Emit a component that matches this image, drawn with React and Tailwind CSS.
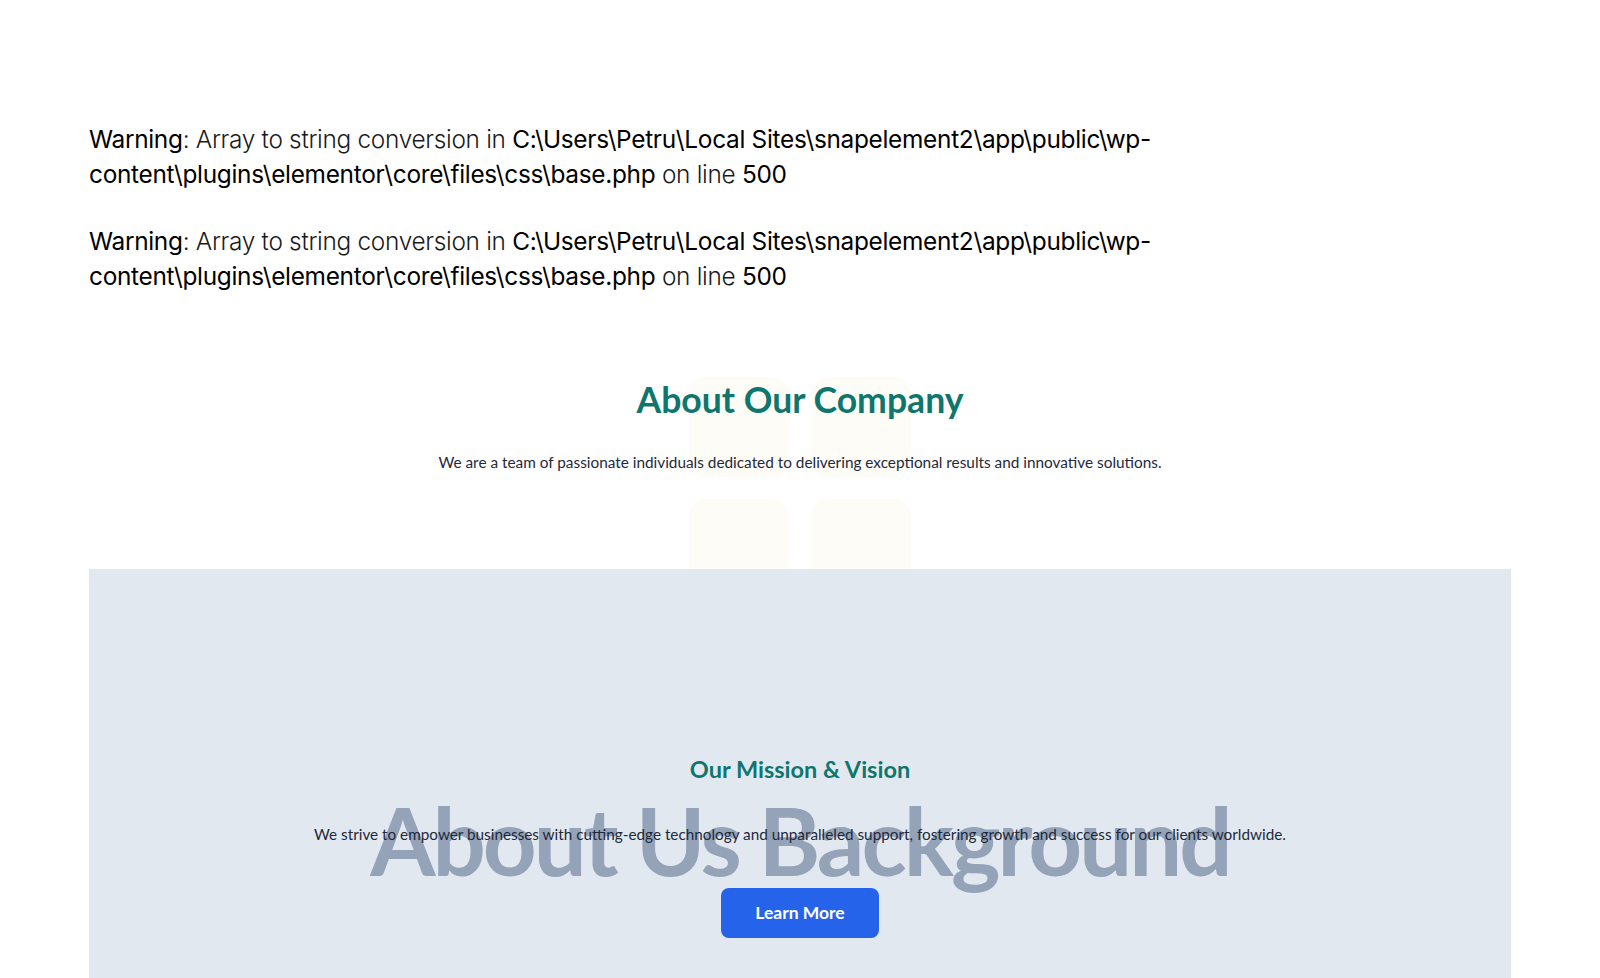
import React from "react";

function Warning() {
  return (
    <p className="font-light text-[#1a1a1a]">
      <b className="font-normal text-black">Warning</b>: Array to string conversion in{" "}
      <b className="font-normal text-black">C:\Users\Petru\Local Sites\snapelement2\app\public\wp-content\plugins\elementor\core\files\css\base.php</b>{" "}
      on line <b className="font-normal text-black">500</b>
    </p>
  );
}

export default function App() {
  return (
    <div className="min-h-[978px] bg-white overflow-hidden">
      <div className="px-[89px] pt-[122px] text-[24.4px] leading-[35px] tracking-[-0.3px]" style={{ fontFamily: "Inter, 'Noto Sans', sans-serif" }}>
        <Warning />
        <div className="mt-8">
          <Warning />
        </div>
      </div>

      <section className="relative mt-[84px] h-[191px] flex flex-col items-center" style={{ fontFamily: "Lato, 'Noto Sans', sans-serif" }}>
        <div className="absolute left-1/2 top-[-1px] -translate-x-1/2 grid grid-cols-2 gap-[22px]">
          <div className="w-[100px] h-[100px] rounded-[17px] bg-[#fdfcf6]" />
          <div className="w-[100px] h-[100px] rounded-[17px] bg-[#fdfcf6]" />
          <div className="w-[100px] h-[100px] rounded-[17px] bg-[#fdfcf6]" />
          <div className="w-[100px] h-[100px] rounded-[17px] bg-[#fdfcf6]" />
        </div>
        <h2 className="relative text-[35.6px] leading-[44px] font-bold text-[#0f766e]">About Our Company</h2>
        <p className="relative mt-[29px] text-[15.35px] leading-[22px] text-[#1e293b]">
          We are a team of passionate individuals dedicated to delivering exceptional results and innovative solutions.
        </p>
      </section>

      <section className="relative mx-[89px] bg-[#e2e8f0] h-[420px] flex flex-col items-center pt-[184px]" style={{ fontFamily: "Lato, 'Noto Sans', sans-serif" }}>
        <h3 className="relative text-[23.5px] leading-[32px] font-bold text-[#0f766e]">Our Mission &amp; Vision</h3>
        <div className="relative mt-[34px] flex flex-col items-center">
          <div className="absolute left-1/2 top-[-34px] -translate-x-1/2 whitespace-nowrap text-[94px] leading-[110px] font-bold tracking-[-3px] text-[#94a3b8]">
            About Us Background
          </div>
          <p className="relative text-[15.3px] leading-[30px] text-[#1e293b]">
            We strive to empower businesses with cutting-edge technology and unparalleled support, fostering growth and success for our clients worldwide.
          </p>
        </div>
        <button className="relative mt-[39px] w-[158px] h-[50px] rounded-[8px] bg-[#2563eb] text-white text-[17.5px] font-bold">
          Learn More
        </button>
      </section>
    </div>
  );
}
